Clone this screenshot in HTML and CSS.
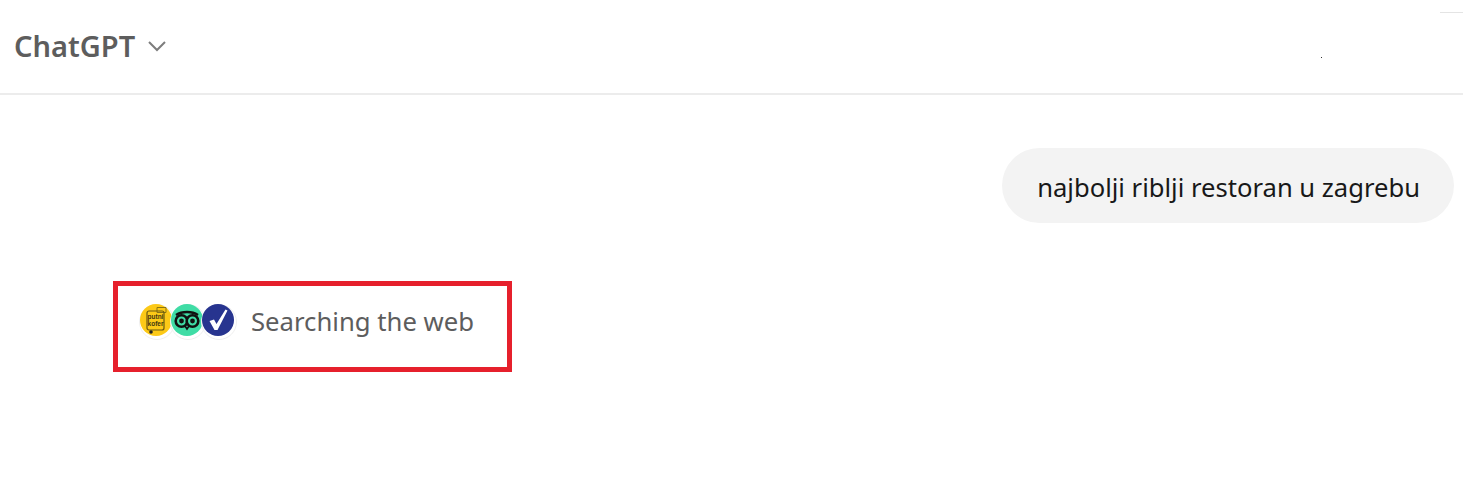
FILE: index.html
```html
<!DOCTYPE html>
<html lang="en">
<head>
  <meta charset="UTF-8">
  <title>ChatGPT</title>
  <link rel="stylesheet" href="styles.css">
</head>
<body>
  <div class="header">
    <span class="model-name">ChatGPT</span>
    <svg class="chevron" width="20" height="12" viewBox="0 0 20 12">
      <path d="M2 2 L10 10 L18 2" fill="none" stroke="#7d7d7d" stroke-width="2"/>
    </svg>
    <span class="speck"></span>
    <span class="corner-line"></span>
  </div>
  <div class="thread">
    <div class="user-row">
      <div class="bubble">najbolji riblji restoran u zagrebu</div>
    </div>
    <div class="search-box">
      <div class="favicons">
        <svg class="favicon" width="36" height="36" viewBox="0 0 36 36">
          <circle cx="18" cy="18" r="17.5" fill="#fff" stroke="#efefef"/>
          <circle cx="17" cy="16" r="16" fill="#fcc917"/>
          <path d="M18 3.500h9v5h-9z" fill="none" stroke="#8a7414" stroke-width="1"/>
          <rect x="8" y="7" width="17" height="19" rx="2" fill="none" stroke="#6b5a10" stroke-width="1.200"/>
          <text class="favicon-text" x="16.500" y="15">putni</text>
          <text class="favicon-text" x="16.500" y="22">kofer</text>
          <circle cx="12" cy="28" r="1.800" fill="#222"/>
        </svg>
        <svg class="favicon" width="36" height="36" viewBox="0 0 36 36">
          <circle cx="18" cy="18" r="17.500" fill="#fff" stroke="#efefef"/>
          <circle cx="17" cy="16" r="16" fill="#3fdca5"/>
          <path d="M6 11 C12 7 22 7 28 11" fill="none" stroke="#111" stroke-width="2.400"/>
          <circle cx="11.500" cy="17" r="5.800" fill="#3fdca5" stroke="#111" stroke-width="2.600"/>
          <circle cx="22.500" cy="17" r="5.800" fill="#3fdca5" stroke="#111" stroke-width="2.600"/>
          <circle cx="11.500" cy="17" r="2.400" fill="#111"/>
          <circle cx="22.500" cy="17" r="2.400" fill="#111"/>
          <path d="M15 22 L17 25 L19 22" fill="none" stroke="#111" stroke-width="1.600"/>
        </svg>
        <svg class="favicon" width="36" height="36" viewBox="0 0 36 36">
          <circle cx="18" cy="18" r="17.500" fill="#fff" stroke="#efefef"/>
          <circle cx="17" cy="16" r="16" fill="#27348f"/>
          <path d="M8.500 17 L13 15.500 L15.500 20 L24.500 5.500 L26.500 6.500 L16.500 26 L13.500 26 Z" fill="#fff"/>
        </svg>
      </div>
      <span class="search-label">Searching the web</span>
    </div>
  </div>
</body>
</html>
```
FILE: styles.css
```css
body {
  font-family: 'Noto Sans', 'Open Sans', sans-serif;
  margin: 0;
  padding: 0;
  background-color: #fff;
  height: 480px;
  overflow: hidden;
}
.header {
  position: relative;
  display: flex;
  align-items: center;
  gap: 12px;
  height: 90px;
  padding: 0 0 3px 14px;
  border-bottom: 2px solid #ececec;
}
.model-name {
  font-size: 29px;
  font-weight: 600;
  color: #5d5d5d;
}
.chevron {
  margin-top: 2px;
}
.speck {
  position: absolute;
  left: 1321px;
  top: 57px;
  width: 1px;
  height: 1px;
  background-color: #333;
}
.corner-line {
  position: absolute;
  left: 1440px;
  top: 12px;
  width: 23px;
  height: 1px;
  background-color: #e4e4e4;
}
.thread {
  display: flex;
  flex-direction: column;
  align-items: flex-start;
}
.user-row {
  display: flex;
  justify-content: flex-end;
  width: 100%;
  padding: 53px 9px 0 0;
  box-sizing: border-box;
}
.bubble {
  display: flex;
  align-items: center;
  height: 75px;
  padding: 3px 34px 0 35px;
  border-radius: 38px;
  background-color: #f3f3f3;
  color: #181818;
  font-size: 25.600px;
  box-sizing: border-box;
}
.search-box {
  display: flex;
  align-items: center;
  gap: 14px;
  width: 399px;
  height: 91px;
  margin: 58px 0 0 113px;
  padding: 0 0 10px 21px;
  border: 5px solid #e6202c;
  box-sizing: border-box;
}
.favicons {
  display: flex;
}
.favicon {
  margin-right: -5px;
}
.favicon:last-child {
  margin-right: 0;
}
.favicon-text {
  font-family: 'Liberation Sans', sans-serif;
  font-size: 6.500px;
  font-weight: 700;
  fill: #3f3710;
  text-anchor: middle;
}
.search-label {
  color: #5d5d5d;
  font-size: 25.700px;
}
```
